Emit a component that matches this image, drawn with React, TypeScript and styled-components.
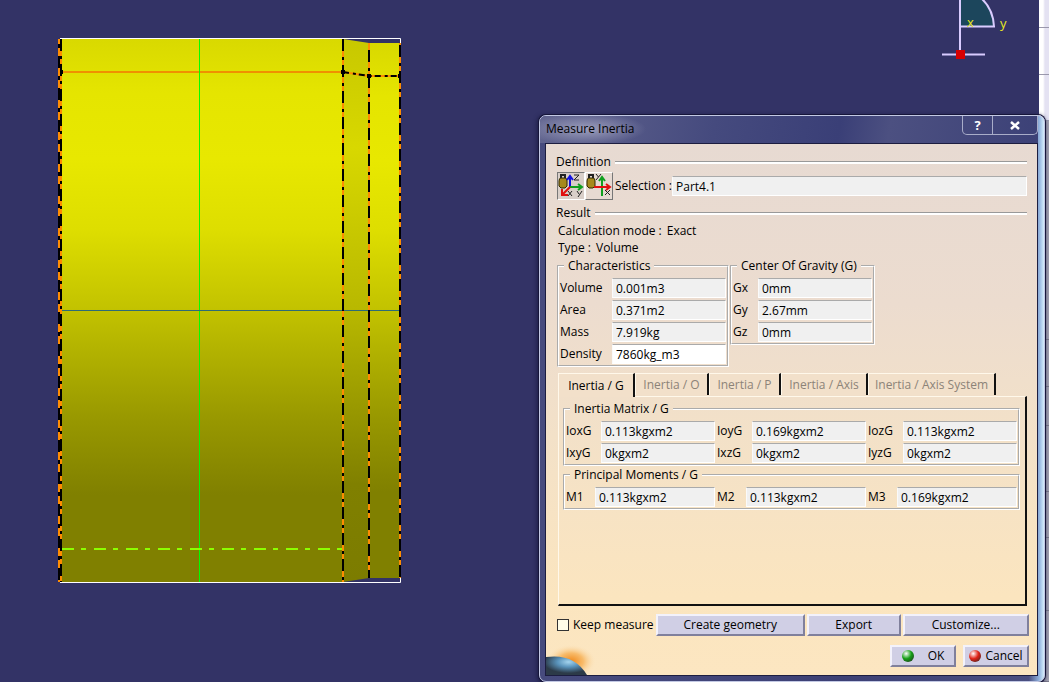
import React, { useState } from "react";
import styled, { createGlobalStyle } from "styled-components";

const GlobalStyle = createGlobalStyle`
  * { box-sizing: border-box; }
  body { margin: 0; background: #333366; }
  body, button, input { font: 12px/18px "Open Sans", "Noto Sans", sans-serif; color: #000; }
`;

const Desktop = styled.main`
  position: relative;
  display: flex;
  min-height: 100vh;
  overflow: hidden;
  background: #333366;
`;

const Viewport = styled.section`
  flex: 1;
  display: flex;
  justify-content: space-between;
`;

const Drawing = styled.svg`
  display: block;
  flex: none;
  font: 13px/16px "Open Sans", sans-serif;
`;

const SideBar = styled.aside`
  width: 10px;
  display: flex;
  flex-direction: column;
  background: linear-gradient(90deg, #fff 0 4px, #e4e2f2 6px);
`;

const SideCell = styled.div<{ $size: number; $dim?: boolean }>`
  flex: 0 0 ${(p) => p.$size}px;
  border-bottom: 1px solid ${(p) => (p.$dim ? "#7c7b8c" : "#9a98ac")};
  background: ${(p) => (p.$dim ? "#a3a2b2" : "transparent")};
`;

const Dialog = styled.section`
  position: absolute;
  left: 539px;
  top: 115px;
  width: 506px;
  padding: 0 6px 5px 5px;
  border: 1px solid #c3c9e4;
  border-radius: 7px;
  background: linear-gradient(90deg, #474b7e, #3c4075 60%, #4a4f80 97%, #8fb0dc 99%, #d4ecfb);
  box-shadow: 0 0 0 1px #16163a, -1px 1px 4px 1px #1c1c44;
`;

const TitleBar = styled.header`
  display: flex;
  justify-content: space-between;
  height: 27px;
  margin: 0 0 0 -5px;
  padding-left: 6px;
  border-radius: 6px 0 0 0;
  background: radial-gradient(ellipse 60px 16px at 46px 13px, #9c9ebc, transparent),
    linear-gradient(100deg, #62658f, #454a7e 35%, #3a3f77 60%, #4c5081 70%, #3c4177);
`;

const Title = styled.h1`
  margin: 4px 0 0;
  font-size: 12px;
  line-height: 18px;
  font-weight: 400;
`;

const WindowButtons = styled.div`
  display: flex;
  height: 19px;
  border: 1px solid #a9adc9;
  border-top: 0;
  border-radius: 0 0 5px 5px;
`;

const WindowButton = styled.button<{ $wide?: boolean }>`
  display: flex;
  align-items: center;
  justify-content: center;
  width: ${(p) => (p.$wide ? 45 : 29)}px;
  padding: 0;
  border: 0;
  border-left: ${(p) => (p.$wide ? "1px solid #a9adc9" : "0")};
  background: transparent;
  color: #fff;
  font-weight: 700;
  font-size: 13px;
  line-height: 16px;
`;

const Body = styled.form`
  position: relative;
  display: flex;
  flex-direction: column;
  padding: 9px 8px 8px 10px;
  border: 1px solid #1c1d40;
  background: linear-gradient(#e7dad2, #ecdccf 30%, #f3e1c8 55%, #fbe5bf 85%, #fce6c1);
`;

const Heading = styled.h2`
  display: flex;
  align-items: center;
  gap: 4px;
  margin: 0 2px 0 0;
  font-size: 12px;
  line-height: 18px;
  font-weight: 400;
  &::after {
    content: "";
    flex: 1;
    height: 2px;
    border-top: 1px solid #999;
    background: #fff;
  }
`;

const SelectionRow = styled.div`
  display: flex;
  align-items: center;
  gap: 2px;
  height: 28px;
  margin: 1px 2px 4px 1px;
`;

const ToolGroup = styled.div`
  display: flex;
`;

const ToolButton = styled.button<{ $pressed?: boolean }>`
  width: 28px;
  height: 28px;
  padding: 0;
  border: 1px solid;
  border-color: ${(p) => (p.$pressed ? "#777 #fff #fff #777" : "#fff #777 #777 #fff")};
  background: ${(p) => (p.$pressed ? "#d9cfc9" : "#e6dad2")};
`;

const FieldLabel = styled.label<{ $width: number }>`
  flex: 0 0 ${(p) => p.$width}px;
  white-space: nowrap;
`;

const Field = styled.input`
  flex: 1;
  min-width: 0;
  width: 0;
  height: 20px;
  padding: 0 3px;
  border: 1px solid;
  border-color: #aaa #fff #fff #fafafa;
  background: #f0f0f0;
  &:not(:read-only) { background: #fff; }
`;

const Info = styled.p`
  display: flex;
  gap: 5px;
  margin: 0 0 0 2px;
  line-height: 17px;
`;

const Groups = styled.div`
  display: flex;
  align-items: flex-start;
  gap: 1px;
  margin: 1px 0 6px 1px;
`;

const Group = styled.fieldset<{ $width?: number }>`
  width: ${(p) => (p.$width ? `${p.$width}px` : "auto")};
  min-width: 0;
  margin: 0;
  padding: 2px 1px 0;
  border: 2px groove #fff;
`;

const Legend = styled.legend`
  margin-left: 4px;
  padding: 0 4px;
  line-height: 18px;
`;

const Row = styled.div`
  display: flex;
  align-items: center;
  gap: 2px;
  height: 22px;
`;

const Cell = styled.div`
  flex: 1;
  display: flex;
  align-items: center;
  min-width: 0;
`;

const Tabs = styled.div`
  display: flex;
  align-items: flex-end;
  height: 23px;
  margin-left: 2px;
`;

const Tab = styled.button<{ $active: boolean; $width: number }>`
  width: ${(p) => p.$width}px;
  height: ${(p) => (p.$active ? 24 : 22)}px;
  margin-bottom: ${(p) => (p.$active ? -1 : 1)}px;
  z-index: ${(p) => (p.$active ? 1 : 0)};
  padding: 0;
  border: 1px solid #fff8ea;
  border-right: 2px solid #111;
  border-bottom: 0;
  background: #f2e0ca;
  color: ${(p) => (p.$active ? "#000" : "#8c8378")};
  white-space: nowrap;
`;

const Panel = styled.div`
  height: 210px;
  margin: 0 2px 8px;
  padding: 3px 5px 0 4px;
  border: 1px solid #fff8ea;
  border-right: 2px solid #111;
  border-bottom: 2px solid #111;
`;

const Actions = styled.div`
  display: flex;
  align-items: center;
  gap: 2px;
  height: 22px;
`;

const Keep = styled.label`
  display: flex;
  flex: 1;
  align-items: center;
  gap: 4px;
  padding-left: 1px;
  white-space: nowrap;
`;

const Check = styled.input`
  appearance: none;
  width: 12px;
  height: 12px;
  margin: 0;
  border: 1px solid #333;
  background: #fffde8;
  &:checked { background: #555; }
`;

const PushButton = styled.button<{ $width: number }>`
  display: flex;
  align-items: center;
  justify-content: center;
  width: ${(p) => p.$width}px;
  height: 22px;
  padding: 0;
  border: 2px solid;
  border-color: #f3f2fb #80809c #80809c #f3f2fb;
  background: #d0cfe5;
  white-space: nowrap;
`;

const Closing = styled.div`
  display: flex;
  justify-content: flex-end;
  gap: 7px;
  margin-top: 9px;
`;

const Lamp = styled.span<{ $color: string; $gap: number }>`
  width: 12px;
  height: 12px;
  margin-right: ${(p) => p.$gap}px;
  border-radius: 50%;
  background: radial-gradient(circle at 35% 30%, #fff, ${(p) => p.$color} 45%, #222);
`;

const Planet = styled.svg`
  position: absolute;
  left: 0;
  bottom: 0;
`;

function Part() {
  return (
    <Drawing width="410" height="600" viewBox="0 0 410 600" aria-label="Part geometry">
      <defs>
        <linearGradient id="body" x1="0" y1="0" x2="0" y2="1">
          <stop offset="0" stopColor="#d9d900" />
          <stop offset=".1" stopColor="#e5e500" />
          <stop offset=".22" stopColor="#e8e800" />
          <stop offset=".35" stopColor="#dede00" />
          <stop offset=".5" stopColor="#c2c200" />
          <stop offset=".7" stopColor="#989800" />
          <stop offset=".84" stopColor="#808000" />
          <stop offset="1" stopColor="#808000" />
        </linearGradient>
        <linearGradient id="cone" x1="0" y1="0" x2="0" y2="1">
          <stop offset="0" stopColor="#c8c800" />
          <stop offset=".2" stopColor="#d8d800" />
          <stop offset=".5" stopColor="#b8b800" />
          <stop offset=".82" stopColor="#808000" />
          <stop offset="1" stopColor="#7c7c00" />
        </linearGradient>
      </defs>
      <path d="M60 39H343V582H60Z" fill="url(#body)" />
      <path d="M343 39L369 43V578L343 582Z" fill="url(#cone)" />
      <path d="M369 43H401V578H369Z" fill="url(#body)" />
      <path d="M60 38.500H400.500V43M60 582.500H400.500V578" fill="none" stroke="#fff" />
      <path d="M62 72H343" stroke="#f09000" strokeWidth="2" />
      <path d="M199 39H200V582H199Z" fill="#00ff00" />
      <path d="M62 310H401V311H62Z" fill="#2c6c78" />
      <path d="M62 549H343" stroke="#8cff00" strokeWidth="2" strokeDasharray="12 7 5 8" />
      <g fill="none" strokeWidth="2">
        <path d="M59 39V582M61 39V582M343 39V582M369 43V578M400 43V578M343 72L369 76H401" stroke="#ff8c00" />
        <path d="M59 44V582" stroke="#000" strokeDasharray="4 8 12 8" />
        <path d="M61 39V582" stroke="#000" strokeDasharray="12 5 3 5" />
        <path d="M343 39V582M369 50V578M400 45V578" stroke="#000" strokeDasharray="12 6 3 5" />
        <path d="M343 72L369 76H401" stroke="#000" strokeDasharray="6 4 3 3" />
      </g>
      <path d="M341 70H345V74H341ZM367 74H371V78H367ZM398 74H401V78H398ZM60 70H63V74H60Z" fill="#000" />
    </Drawing>
  );
}

function Compass() {
  return (
    <Drawing width="100" height="60" viewBox="0 0 100 60" aria-label="Compass">
      <path d="M21 0H43Q54 9 55 26H21Z" fill="#1c465c" />
      <path d="M21 0V51M21 26.500H55Q54 9 43 -1M3 54.500H46" fill="none" stroke="#d9ccff" strokeWidth="2" />
      <path d="M17 50H26V59H17Z" fill="#d60000" />
      <text x="28" y="27" fill="#e8e820">x</text>
      <text x="61" y="28" fill="#e8e820">y</text>
    </Drawing>
  );
}

function ToolIcon({ flat }: { flat?: boolean }) {
  return (
    <svg width="26" height="26" viewBox="0 0 26 26" fill="none">
      <path d="M1 8Q1 5 3 5H7Q9 5 9 8V13L7 15H3L1 13Z" fill="#a68a1c" stroke="#332b00" />
      <path d="M3 5V2H7V5" stroke="#222" strokeWidth="2" />
      {flat ? (
        <>
          <path d="M16 23V5M13 8L16 4L19 8" stroke="#10a020" strokeWidth="2" />
          <path d="M8 14H23M20 11L24 14L20 17" stroke="#e01010" strokeWidth="2" />
          <path d="M10 1L12.500 4M15 1L10 7M19 17L24 22M24 17L19 22" stroke="#222" />
        </>
      ) : (
        <>
          <path d="M12 14V4M9 7L12 3L15 7" stroke="#1010e0" strokeWidth="2" />
          <path d="M12 14H23M20 11L24 14L20 17" stroke="#10a020" strokeWidth="2" />
          <path d="M12 14L5 21M4 16V22H10" stroke="#e01010" strokeWidth="2" />
          <path d="M16 2H21L16 7H21M10 18L14 23M14 18L10 23M19 18L21 21M24 18L20 24" stroke="#222" />
        </>
      )}
    </svg>
  );
}

function Entry({ id, label, value, width, editable }: {
  id: string; label: string; value: string; width: number; editable?: boolean;
}) {
  return (
    <Cell>
      <FieldLabel htmlFor={id} $width={width}>{label}</FieldLabel>
      <Field id={id} defaultValue={value} readOnly={!editable} />
    </Cell>
  );
}

const characteristics = [["Volume", "0.001m3"], ["Area", "0.371m2"], ["Mass", "7.919kg"], ["Density", "7860kg_m3"]];
const gravity = [["Gx", "0mm"], ["Gy", "2.67mm"], ["Gz", "0mm"]];
const matrix = [
  [["IoxG", "0.113kgxm2"], ["IoyG", "0.169kgxm2"], ["IozG", "0.113kgxm2"]],
  [["IxyG", "0kgxm2"], ["IxzG", "0kgxm2"], ["IyzG", "0kgxm2"]],
];
const moments = [["M1", "0.113kgxm2"], ["M2", "0.113kgxm2"], ["M3", "0.169kgxm2"]];
const tabs: [string, number][] = [
  ["Inertia / G", 77], ["Inertia / O", 74], ["Inertia / P", 72], ["Inertia / Axis", 87], ["Inertia / Axis System", 128],
];
const sideCells = [28, 47, 46, 219, 47, 39, 66, 46, 73, 71];

export default function App() {
  const [active, setActive] = useState(0);
  return (
    <>
      <GlobalStyle />
      <Desktop>
        <Viewport>
          <Part />
          <Compass />
        </Viewport>
        <SideBar>
          {sideCells.map((size, i) => <SideCell key={i} $size={size} $dim={i > 2} />)}
        </SideBar>
        <Dialog aria-label="Measure Inertia">
          <TitleBar>
            <Title>Measure Inertia</Title>
            <WindowButtons>
              <WindowButton aria-label="Help">?</WindowButton>
              <WindowButton $wide aria-label="Close">
                <svg width="10" height="9" viewBox="0 0 10 9" aria-hidden="true">
                  <path d="M1 1L9 8M9 1L1 8" stroke="#fff" strokeWidth="2.500" />
                </svg>
              </WindowButton>
            </WindowButtons>
          </TitleBar>
          <Body onSubmit={(e) => e.preventDefault()}>
            <Heading>Definition</Heading>
            <SelectionRow>
              <ToolGroup>
                <ToolButton type="button" $pressed aria-label="Measure inertia 3D"><ToolIcon /></ToolButton>
                <ToolButton type="button" aria-label="Measure inertia 2D"><ToolIcon flat /></ToolButton>
              </ToolGroup>
              <Entry id="selection" label="Selection :" value="Part4.1" width={55} />
            </SelectionRow>
            <Heading>Result</Heading>
            <Info><span>Calculation mode :</span><span>Exact</span></Info>
            <Info><span>Type :</span><span>Volume</span></Info>
            <Groups>
              <Group $width={172}>
                <Legend>Characteristics</Legend>
                {characteristics.map(([l, v]) => (
                  <Row key={l}><Entry id={l} label={l} value={v} width={52} editable={l === "Density"} /></Row>
                ))}
              </Group>
              <Group $width={145}>
                <Legend>Center Of Gravity (G)</Legend>
                {gravity.map(([l, v]) => <Row key={l}><Entry id={l} label={l} value={v} width={25} /></Row>)}
              </Group>
            </Groups>
            <Tabs role="tablist">
              {tabs.map(([name, width], i) => (
                <Tab key={name} type="button" role="tab" aria-selected={i === active}
                  $active={i === active} $width={width} onClick={() => setActive(i)}>{name}</Tab>
              ))}
            </Tabs>
            <Panel role="tabpanel">
              <Group>
                <Legend>Inertia Matrix / G</Legend>
                {matrix.map((row, i) => (
                  <Row key={i}>{row.map(([l, v]) => <Entry key={l} id={l} label={l} value={v} width={35} />)}</Row>
                ))}
              </Group>
              <Group>
                <Legend>Principal Moments / G</Legend>
                <Row>{moments.map(([l, v]) => <Entry key={l} id={l} label={l} value={v} width={29} />)}</Row>
              </Group>
            </Panel>
            <Actions>
              <Keep><Check type="checkbox" />Keep measure</Keep>
              <PushButton type="button" $width={150}>Create geometry</PushButton>
              <PushButton type="button" $width={94}>Export</PushButton>
              <PushButton type="button" $width={127}>Customize...</PushButton>
            </Actions>
            <Closing>
              <PushButton type="submit" $width={66}><Lamp $color="#16a016" $gap={14} />OK</PushButton>
              <PushButton type="button" $width={66}><Lamp $color="#e02418" $gap={4} />Cancel</PushButton>
            </Closing>
            <Planet width="50" height="34" viewBox="0 0 50 34" aria-hidden="true">
              <defs>
                <radialGradient id="glow" cx=".5" cy=".6" r=".5">
                  <stop offset="0" stopColor="#f08a1c" />
                  <stop offset=".5" stopColor="#f8bc6c" />
                  <stop offset="1" stopColor="#fbe5bf" stopOpacity="0" />
                </radialGradient>
                <radialGradient id="globe" cx=".55" cy=".3" r=".6">
                  <stop offset="0" stopColor="#a4d4ee" />
                  <stop offset=".45" stopColor="#5a94bc" />
                  <stop offset="1" stopColor="#2c3a48" />
                </radialGradient>
              </defs>
              <path d="M0 0H50V34H0Z" fill="url(#glow)" />
              <path d="M0 16Q28 12 41 34H0Z" fill="url(#globe)" />
            </Planet>
          </Body>
        </Dialog>
      </Desktop>
    </>
  );
}
